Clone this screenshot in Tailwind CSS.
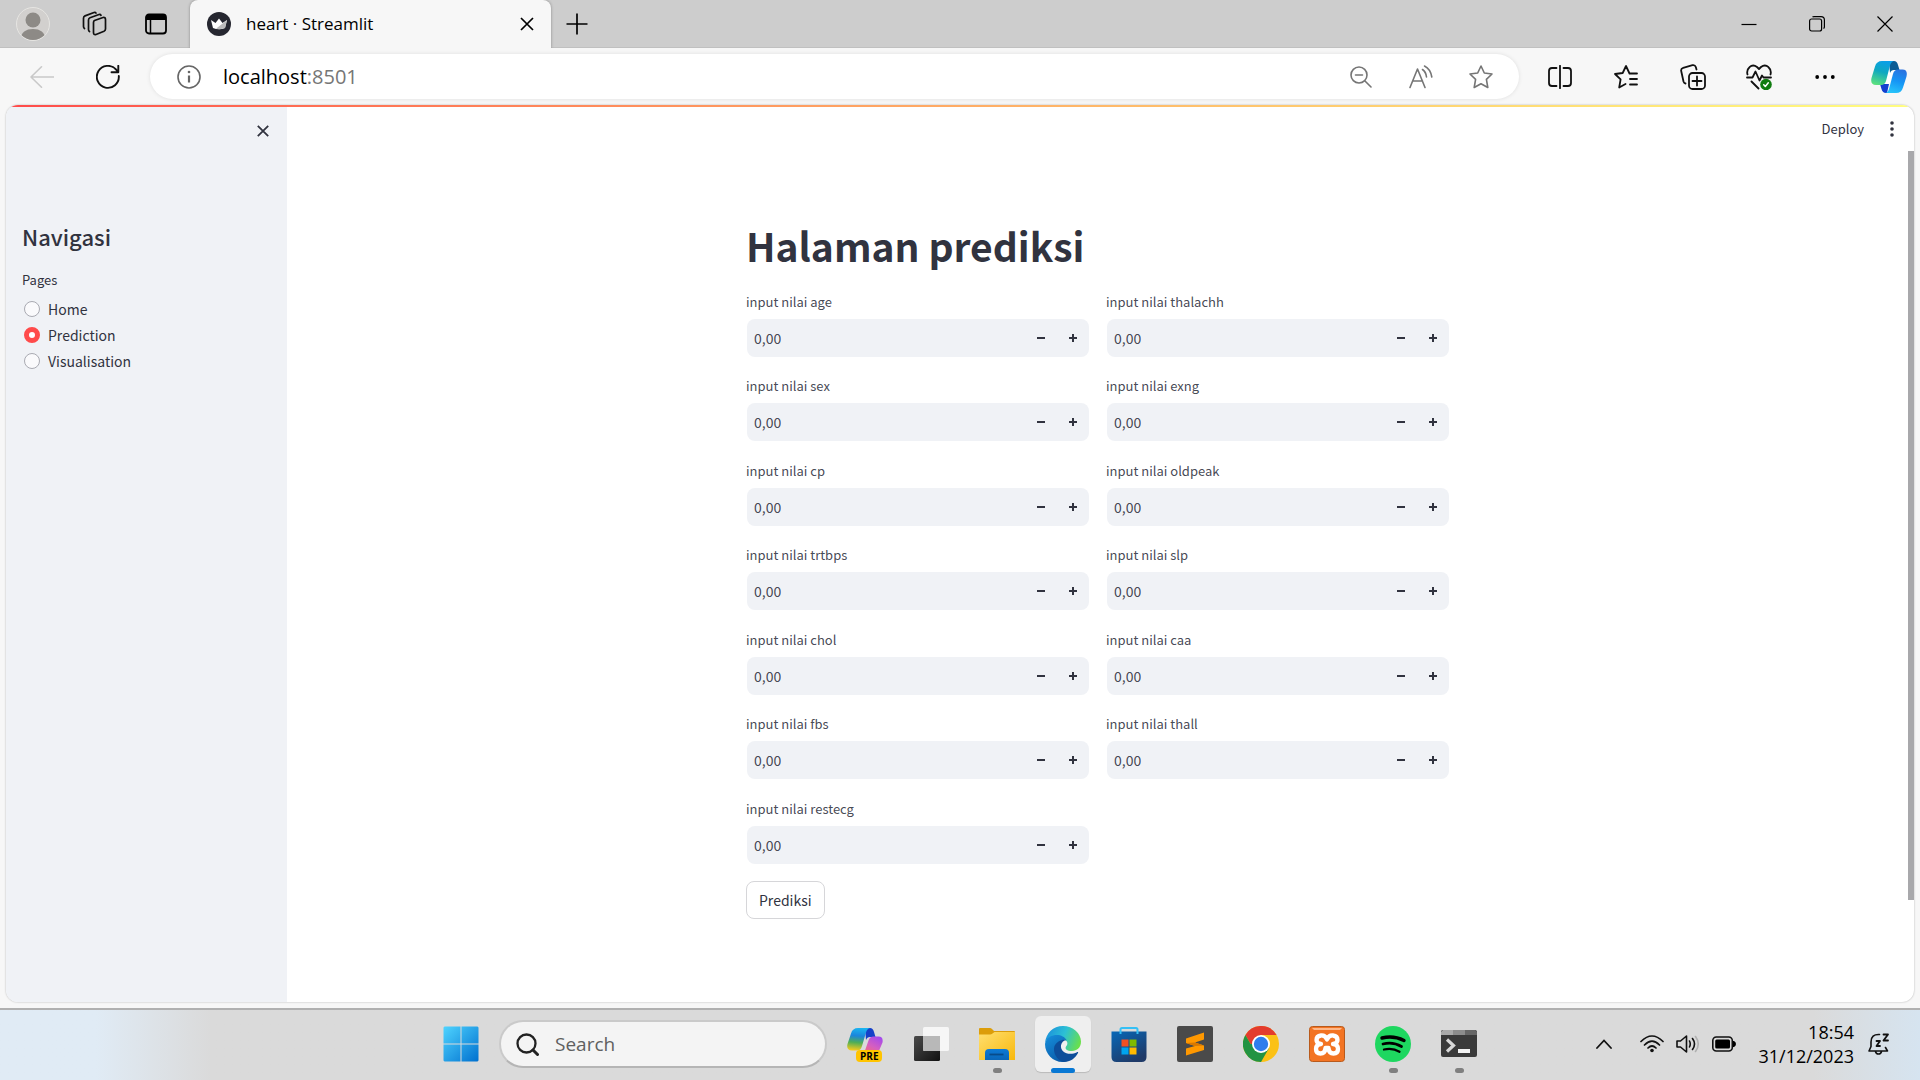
<!DOCTYPE html>
<html lang="id">
<head>
<meta charset="utf-8">
<title>heart · Streamlit</title>
<script src="https://cdn.jsdelivr.net/npm/@tailwindcss/browser@4"></script>
</head>
<body class="flex h-screen flex-col overflow-hidden bg-[#f7f7f7] font-['Open_Sans',sans-serif] text-black">

<!-- Tab strip -->
<header class="flex h-12 shrink-0 items-stretch border-b border-[#c0c0c0] bg-[#cdcdcd]">
  <div class="flex pl-0.5">
    <button aria-label="Profile" class="flex w-[61px] items-center justify-center">
      <svg class="size-[34px]" viewBox="0 0 34 34"><defs><clipPath id="av"><circle cx="17" cy="17" r="16"/></clipPath></defs><circle cx="17" cy="17" r="16.500" fill="#d2d0ce" stroke="#e6e5e2"/><g clip-path="url(#av)" fill="#8d8a86"><circle cx="17" cy="13" r="7.500"/><path d="M4 36c0-10 5-14 13-14s13 4 13 14z"/></g></svg>
    </button>
    <button aria-label="Workspaces" class="flex w-[61px] items-center justify-center">
      <svg class="size-[26px]" viewBox="0 0 26 26" fill="none" stroke="#111" stroke-width="1.700" stroke-linejoin="round" stroke-linecap="round"><path d="M13.500 9.500 22 6.500q2.500-.5 2.500 2V18q0 1.500-1.500 2.200L15 23.500q-2.500.7-2.500-2V11.500q0-1.500 1-2z"/><path d="M8.500 20.500Q7.500 20 7.500 18.500V9q0-1.500 1.500-2.200L18 3.500q1.500-.3 2 .8"/><path d="M3.500 17.500q-1-.7-1-2V7.200q0-1.700 1.500-2.300L13 1.500q1.500-.3 2 .6"/></svg>
    </button>
    <button aria-label="Tab actions" class="flex w-[64px] items-center justify-center">
      <svg class="size-[22px]" viewBox="0 0 22 22"><rect x="1" y="1.500" width="20" height="19" rx="3" fill="none" stroke="#000" stroke-width="1.800"/><path d="M1 7V4q0-3 3-3h14q3 0 3 3v3z"/><path d="M5.500 6v14" stroke="#000" stroke-width="1.500"/></svg>
    </button>
  </div>
  <div class="-mb-px ml-0.5 flex w-[361px] items-center rounded-t-lg bg-[#f7f7f7] pr-3 pl-[17px] shadow-[0_0_3px_rgba(0,0,0,0.35)] [clip-path:inset(0_-4px_0_-4px)]">
    <svg class="size-6" viewBox="0 0 24 24"><circle cx="12" cy="12" r="12" fill="#262730"/><path d="M4 8l4.500 3L12 6.500l3.500 4.500L20 8l-2 8q-6 2.500-12 0z" fill="#fff"/><path d="M20 8l-2 8q-4 1.800-9 .8z" fill="#bbb"/></svg>
    <span class="ml-[15px] flex-1 text-[17px] leading-6">heart · Streamlit</span>
    <button aria-label="Close tab" class="flex size-6 items-center justify-center"><svg class="size-3.5" viewBox="0 0 14 14" stroke="#000" stroke-width="1.700"><path d="M1 1l12 12M13 1L1 13"/></svg></button>
  </div>
  <button aria-label="New tab" class="ml-0.5 flex w-12 items-center justify-center"><svg class="size-[22px]" viewBox="0 0 22 22" stroke="#000" stroke-width="1.700"><path d="M11 .5v21M.5 11h21"/></svg></button>
  <div class="ml-auto flex pr-px">
    <button aria-label="Minimize" class="flex w-[68px] items-center justify-center"><svg class="size-4" viewBox="0 0 16 16" stroke="#000" stroke-width="1.200"><path d="M.5 8.500h15"/></svg></button>
    <button aria-label="Restore" class="flex w-[68px] items-center justify-center"><svg class="size-4" viewBox="0 0 16 16" fill="none" stroke="#000" stroke-width="1.200"><rect x=".6" y="3" width="12" height="12" rx="2"/><path d="M3.500 1.200Q4 .6 5 .6h7q3.400 0 3.400 3.400v7q0 1-.9 1.500"/></svg></button>
    <button aria-label="Close window" class="flex w-[68px] items-center justify-center"><svg class="size-4" viewBox="0 0 16 16" stroke="#000" stroke-width="1.200"><path d="M.5.5l15 15M15.500.5l-15 15"/></svg></button>
  </div>
</header>

<!-- Address bar -->
<nav class="flex h-[57px] shrink-0 items-center pl-[9px]">
  <button aria-label="Back" class="flex w-[66px] items-center justify-center"><svg class="size-6" viewBox="0 0 24 24" fill="none" stroke="#c9c9c9" stroke-width="1.600" stroke-linecap="round" stroke-linejoin="round"><path d="M23.500 12H1M11.500 1.800 1 12l10.500 10.200"/></svg></button>
  <button aria-label="Refresh" class="flex w-[66px] items-center justify-center"><svg class="size-6" viewBox="0 0 24 24" fill="none" stroke="#111" stroke-width="1.900" stroke-linecap="round" stroke-linejoin="round"><path d="M22.800 11A11 11 0 1 1 20 4.500L22 7M22.300.8V7.200H15.500"/></svg></button>
  <div class="ml-[9px] flex h-[45px] flex-1 items-center rounded-full bg-white pr-2 pl-[27px] shadow-[0_0_4px_rgba(0,0,0,0.1)]">
    <svg class="size-6 shrink-0" viewBox="0 0 24 24" fill="none" stroke="#666" stroke-width="1.600"><circle cx="12" cy="12" r="11"/><path d="M12 10.500V17.500" stroke-width="2.200"/><circle cx="12" cy="7" r="1.300" fill="#666" stroke="none"/></svg>
    <div class="ml-[22px] flex-1 text-[20px] leading-6">localhost<span class="text-[#767676]">:8501</span></div>
    <button aria-label="Zoom out" class="flex w-[60px] items-center justify-center"><svg class="size-[22px]" viewBox="0 0 22 22" fill="none" stroke="#757575" stroke-width="1.600" stroke-linecap="round"><circle cx="9" cy="9" r="8"/><path d="M15 15l6 6M5.500 9h7"/></svg></button>
    <button aria-label="Read aloud" class="flex w-[60px] items-center justify-center"><svg class="size-6" viewBox="0 0 24 24" fill="none" stroke="#757575" stroke-width="1.600" stroke-linecap="round" stroke-linejoin="round"><path d="M1 22.500 8.500 4 16 22.500M4 16h9.500M13.500 4.500Q17 7 17.500 12M15.500 1Q21.500 4 22.800 12"/></svg></button>
    <button aria-label="Add to favorites" class="flex w-[60px] items-center justify-center"><svg class="size-6" viewBox="0 0 24 24" fill="none" stroke="#757575" stroke-width="1.600" stroke-linejoin="round"><path d="M12 1l3.300 7 7.700 1-5.600 5.400L18.800 22.500 12 18.700 5.200 22.500l1.400-8.100L1 9l7.700-1z"/></svg></button>
  </div>
  <div class="ml-2 flex items-center">
    <button aria-label="Split screen" class="flex w-[66px] items-center justify-center"><svg class="size-6" viewBox="0 0 24 24" fill="none" stroke="#111" stroke-width="1.800" stroke-linecap="round"><path d="M12 .8v22.400M8.500 3H4Q1 3 1 6v12q0 3 3 3h4.500M15.500 3H20q3 0 3 3v12q0 3-3 3h-4.500"/></svg></button>
    <button aria-label="Favorites" class="flex w-[66px] items-center justify-center"><svg class="size-6" viewBox="0 0 24 24" fill="none" stroke="#111" stroke-width="1.800" stroke-linecap="round" stroke-linejoin="round"><path d="M23 8.500h-7.500L12 1 8.700 8 1 9l5.600 5.400L5.200 22.500 11.500 19M16 14h7M16 19.500h7"/></svg></button>
    <button aria-label="Collections" class="flex w-[67px] items-center justify-center"><svg class="size-[26px]" viewBox="0 0 26 26" fill="none" stroke="#111" stroke-width="1.800" stroke-linecap="round" stroke-linejoin="round"><rect x="9" y="9" width="16" height="16" rx="3.500"/><path d="M17 12.500v9M12.500 17h9M5.500 19.500q-1.500-.3-2-2L1.200 7q-.5-2.500 2-3.200L12.500 1.200q2.500-.5 3.300 1.800l.7 2.500"/></svg></button>
    <button aria-label="Browser essentials" class="flex w-[66px] items-center justify-center"><svg class="size-[26px]" viewBox="0 0 26 26" fill="none" stroke="#111" stroke-width="1.800" stroke-linecap="round" stroke-linejoin="round"><path d="M1.500 10.500Q.3 6 3.500 3.200 7-.2 11 3l2 2 2-2q4-3.200 7.500.2 3.200 2.800 2 7.300M1 13.500h5.500l3-6 4 9 2.500-5 1.500 2H25M5.500 17.500l7 7"/><circle cx="20" cy="20.500" r="5.800" fill="#107c10" stroke="none"/><path d="M17.700 20.800l1.600 1.600 3-3.600" stroke="#fff" stroke-width="1.500"/></svg></button>
    <button aria-label="Settings and more" class="flex w-[66px] items-center justify-center"><svg class="h-1.5 w-5" viewBox="0 0 20 6"><circle cx="2.200" cy="3" r="1.900"/><circle cx="10" cy="3" r="1.900"/><circle cx="17.800" cy="3" r="1.900"/></svg></button>
    <button aria-label="Copilot" class="flex w-[62px] items-center justify-center"><svg class="h-8 w-9" viewBox="0 0 36 32"><defs><linearGradient id="c1" x1=".6" y1="0" x2=".3" y2="1"><stop offset="0" stop-color="#0a9fe8"/><stop offset=".45" stop-color="#0fa8c0"/><stop offset="1" stop-color="#5be07f"/></linearGradient><linearGradient id="c2" x1=".7" y1="0" x2=".4" y2="1"><stop offset="0" stop-color="#2a72e0"/><stop offset=".5" stop-color="#1595f5"/><stop offset="1" stop-color="#27c3fa"/></linearGradient></defs><path d="M14 9h9l-5 15h-6z" fill="#fff"/><path d="M9 23h9l-2 9h-1q-3.500 0-4.500-4z" fill="#1240d0"/><path d="M18 0h5q3 0 4 4l1.500 5H23q-3 0-4 3z" fill="#0a5c94"/><path d="M11 0h12q-3 .5-4 4.500L15 20q-1.200 4-5 4H5Q-1 24 .5 17L4 5.500Q5.500 0 11 0z" fill="url(#c1)"/><path d="M25 32H14.500q2.500-.5 3.500-4l4-15q1.200-4.500 5-4.500h4.500q5.500 0 4 7L32 26.500Q30.500 32 25 32z" fill="url(#c2)"/></svg></button>
  </div>
</nav>

<!-- Streamlit page -->
<div class="mx-1.5 mb-1.5 flex min-h-0 flex-1 flex-col overflow-hidden rounded-xl bg-white font-['Noto_Sans_CJK_SC',sans-serif] text-[#31333f] shadow-[0_0_2px_rgba(0,0,0,0.3)]">
  <div class="h-0.5 shrink-0 bg-linear-to-r from-[#ff4b4b] to-[#fffd80]"></div>
  <div class="flex min-h-0 flex-1">
    <aside class="w-[281px] shrink-0 bg-[#f0f2f6] pl-4">
      <div class="flex h-12 items-center justify-end pr-3">
        <button aria-label="Close sidebar" class="flex size-6 items-center justify-center"><svg class="size-3" viewBox="0 0 12 12" stroke="#31333f" stroke-width="1.800"><path d="M.8.8l10.400 10.400M11.200.8L.8 11.200"/></svg></button>
      </div>
      <h2 class="mt-[65px] text-[22px] leading-8 font-medium">Navigasi</h2>
      <fieldset class="mt-[18px]">
        <legend class="text-[13px] leading-5">Pages</legend>
        <div class="mt-1.5 flex flex-col text-[14px] leading-[26px]">
          <label class="flex items-center gap-2 pl-0.5"><input type="radio" name="page" class="size-4 appearance-none rounded-full border border-[#a9aab2] bg-[#fafafc] checked:border-[5px] checked:border-[#ff4b4b] checked:bg-white">Home</label>
          <label class="flex items-center gap-2 pl-0.5"><input type="radio" name="page" checked class="size-4 appearance-none rounded-full border border-[#a9aab2] bg-[#fafafc] checked:border-[5px] checked:border-[#ff4b4b] checked:bg-white">Prediction</label>
          <label class="flex items-center gap-2 pl-0.5"><input type="radio" name="page" class="size-4 appearance-none rounded-full border border-[#a9aab2] bg-[#fafafc] checked:border-[5px] checked:border-[#ff4b4b] checked:bg-white">Visualisation</label>
        </div>
      </fieldset>
    </aside>
    <div class="flex min-w-0 flex-1 flex-col">
      <div class="flex h-11 shrink-0 items-center justify-end gap-[26px] pr-5">
        <button class="text-[13px] leading-5">Deploy</button>
        <button aria-label="Main menu"><svg class="h-4 w-1" viewBox="0 0 4 16" fill="#31333f"><circle cx="2" cy="2" r="1.800"/><circle cx="2" cy="8" r="1.800"/><circle cx="2" cy="14" r="1.800"/></svg></button>
      </div>
      <div class="flex min-h-0 flex-1">
        <main class="flex-1 pt-[66px]">
          <div class="mx-auto max-w-[703px]">
            <h1 class="text-[39px] leading-14 font-bold">Halaman prediksi</h1>
            <form class="mt-[19px]">
              <div id="fields" class="-mb-0.5 grid h-[591px] grid-flow-col grid-cols-2 grid-rows-7 gap-x-[17px]"></div>
              <button type="button" class="h-[38px] rounded-lg border border-[#d6d6d9] bg-white px-3 text-[14px] leading-5">Prediksi</button>
            </form>
          </div>
        </main>
        <div class="w-1.5"><div class="h-[88%] bg-[#a8a8ab]"></div></div>
      </div>
    </div>
  </div>
</div>

<!-- Taskbar -->
<footer class="grid h-[72px] shrink-0 grid-cols-[1fr_auto_1fr] items-stretch border-t-2 border-[#b0b0b0] bg-linear-to-r from-[#e0ebf5] from-5% via-[#dadada] via-11% to-[#dadada]">
  <div></div>
  <div class="flex items-center pb-0.5">
    <button aria-label="Start" class="flex w-[66px] justify-center"><svg class="size-9" viewBox="0 0 36 36"><defs><linearGradient id="w" x1="0" y1="0" x2="1" y2="1"><stop offset="0" stop-color="#4fd4ff"/><stop offset="1" stop-color="#0070cf"/></linearGradient></defs><path fill="url(#w)" d="M1.500.5H17.500V17.500H.5V1.500zM18.500.5H34.500L35.500 1.500V17.500H18.500zM.5 18.500H17.500V35.500H1.500L.5 34.500zM18.500 18.500H35.500V34.500L34.500 35.500H18.500z"/></svg></button>
    <label class="mx-[5px] flex h-12 w-[328px] items-center rounded-full border-2 border-[#cacaca] border-b-[#b5b5b5] bg-[#f4f4f4] pl-[15px]">
      <svg class="size-[23px] shrink-0" viewBox="0 0 23 23" fill="none" stroke="#222" stroke-width="2.300" stroke-linecap="round"><circle cx="10.500" cy="10.500" r="9"/><path d="M17 17l4.500 4.500" stroke-width="3"/></svg>
      <input type="text" aria-label="Search" placeholder="Search" class="ml-4 w-40 bg-transparent text-[19px] leading-6 outline-none placeholder:text-[#606060]">
    </label>
    <button aria-label="Copilot preview" class="relative flex w-[66px] justify-center"><svg class="size-9" viewBox="0 0 36 36"><defs><linearGradient id="p1" x1=".5" y1="0" x2=".4" y2="1"><stop offset="0" stop-color="#1ab4f0"/><stop offset=".35" stop-color="#1a85dc"/><stop offset=".65" stop-color="#4fae56"/><stop offset="1" stop-color="#f7cb1c"/></linearGradient><linearGradient id="p2" x1=".9" y1="0" x2=".2" y2="1"><stop offset="0" stop-color="#a048f0"/><stop offset=".5" stop-color="#d55fc0"/><stop offset="1" stop-color="#ff7060"/></linearGradient></defs><path d="M18 2h5q3 0 4 4l1.500 5H23q-3 0-4 3z" fill="#1540c8"/><path d="M11 2h12q-3 .5-4 4.500L15 20q-1.200 4.500-5 4.500H5Q-1 24.500 .5 18L4 7.500Q5.500 2 11 2z" fill="url(#p1)"/><path d="M25 29H11q6-.5 7-4.500l3.500-10q1.200-4 5-4h5q5 0 4 6L31.500 26q-1.500 3-6.500 3z" fill="url(#p2)"/></svg><span class="absolute top-6 left-6 rounded-sm bg-[#ffc400] px-1 text-[10px] leading-3 font-bold">PRE</span></button>
    <button aria-label="Task view" class="flex w-[66px] justify-center"><svg class="size-9" viewBox="0 0 36 36"><defs><linearGradient id="t" x1="0" y1="0" x2="1" y2="1"><stop offset="0" stop-color="#4a4a4a"/><stop offset="1" stop-color="#111"/></linearGradient></defs><rect x="1" y="10" width="26" height="25" rx="1.500" fill="url(#t)"/><rect x="10" y="1" width="26" height="24" rx="1.500" fill="#f6f6f6"/><path d="M10 10h17v15H11.500L10 23.500z" fill="#b8b8b8"/></svg></button>
    <button aria-label="File Explorer" class="relative flex w-[66px] justify-center"><svg class="size-9" viewBox="0 0 36 36"><defs><linearGradient id="f" x1="0" y1="0" x2="1" y2="1"><stop offset="0" stop-color="#ffdf70"/><stop offset="1" stop-color="#f8b80c"/></linearGradient><linearGradient id="f2" x1="0" y1="0" x2="0" y2="1"><stop offset="0" stop-color="#0d7ad6"/><stop offset="1" stop-color="#0a66b8"/></linearGradient></defs><path d="M0 3q0-1 1-1h10q1 0 2 1l2 2h20q1 0 1 1v6H0z" fill="#dc9d0a"/><path d="M0 8.500h11q1.500 0 2.500-1L15.500 6H36v28H0z" fill="url(#f)"/><path d="M6 34v-7q0-4 4-4h16q4 0 4 4v7z" fill="url(#f2)"/><path d="M10.500 28.500h14" stroke="#084b8a" stroke-width="1.800"/></svg><span class="absolute top-[42px] h-[5px] w-[9px] rounded-full bg-[#808080]"></span></button>
    <button aria-label="Microsoft Edge" class="relative mx-[5px] flex h-14 w-14 items-center justify-center rounded-md bg-[#efefef] shadow-[0_1px_1px_rgba(0,0,0,0.15)]"><svg class="size-9" viewBox="0 0 36 36"><defs><linearGradient id="e1" x1="0" y1=".3" x2="1" y2=".6"><stop offset="0" stop-color="#1b90dc"/><stop offset=".5" stop-color="#2cc0d5"/><stop offset="1" stop-color="#6ae04a"/></linearGradient><linearGradient id="e2" x1="0" y1="0" x2=".6" y2="1"><stop offset="0" stop-color="#168fdc"/><stop offset="1" stop-color="#0a5aa8"/></linearGradient></defs><path d="M0 17C1 7 8 0 18 0s18 7.500 18 15.500c0 6-4 9.500-9 9.500s-7.500-2-6-4.500c2-2 2-5-1-6.500C13 8 3 9 0 17z" fill="url(#e1)"/><path d="M0 18C1 11 7 9 12 9c4 0 8 2 9.500 5-5-1-8.500 3-8 8 .5 7 6 12 13 11-3 2-6 3-9 3C8 36 0 28 0 18z" fill="url(#e2)"/><path d="M21.500 14c-5-1-10 2-12 6-2 6 2 14 9 16 7 0 12-4 14.500-9 .5-1-.3-1.300-1-.8-8 4-17 0-16-7 .5-3 3-5 5.500-5.200z" fill="#0d4d9a"/></svg><span class="absolute -bottom-px h-[5px] w-6 rounded-full bg-[#0878d4]"></span></button>
    <button aria-label="Microsoft Store" class="flex w-[66px] justify-center"><svg class="size-9" viewBox="0 0 36 36"><defs><linearGradient id="s" x1="0" y1="0" x2=".6" y2="1"><stop offset="0" stop-color="#0868b8"/><stop offset="1" stop-color="#1f3a68"/></linearGradient></defs><path d="M.5 5.500h35V31q0 5-5 5h-25q-5 0-5-5z" fill="url(#s)"/><path d="M9.500 8V3.500Q9.500 2 11 2h14q1.500 0 1.500 1.500V8" fill="none" stroke="#35c0f5" stroke-width="2"/><path d="M10.500 13.500h7v7h-7z" fill="#f25022"/><path d="M18.500 13.500h7v7h-7z" fill="#7fba00"/><path d="M10.500 21.500h7v7h-7z" fill="#00a4ef"/><path d="M18.500 21.500h7v7h-7z" fill="#ffb900"/></svg></button>
    <button aria-label="Sublime Text" class="flex w-[66px] justify-center"><svg class="size-9" viewBox="0 0 36 36"><rect width="36" height="36" rx="2" fill="#4a4a4a"/><path d="M9 12.500 27 6.500v7L18 16.500 27 19.500V24L9 29.500V22.500L18 20 9 17z" fill="#ff9800"/><path d="M18 16.500 27 19.500 18 20 9 17z" fill="#d97800"/></svg></button>
    <button aria-label="Google Chrome" class="flex w-[66px] justify-center"><svg class="size-9" viewBox="0 0 36 36"><circle cx="18" cy="18" r="18" fill="#fbc116"/><path d="M2.400 9A18 18 0 0 1 33.600 9H18L10.200 22.500z" fill="#e33b2e"/><path d="M2.400 9A18 18 0 0 0 18 36l7.800-13.500L18 18H7.600z" fill="#229342"/><circle cx="18" cy="18" r="9" fill="#fff"/><circle cx="18" cy="18" r="7.200" fill="#2f7ded"/></svg></button>
    <button aria-label="XAMPP" class="flex w-[66px] justify-center"><svg class="size-9" viewBox="0 0 36 36"><rect x=".5" y=".5" width="35" height="35" rx="3" fill="#f37423" stroke="#b85a1c"/><path d="M3 2h30l-2 2H5z" fill="#ffb888"/><path d="M18 13.500q-2-4.500-6-4-4.500.5-4.500 4.500 0 3.500 4.500 4-5 .5-5 5t4.500 4.500q4.500 0 5-5.500h3q.5 5.500 5 5.500t4.500-4.500q0-4.500-5-5 4.500-.5 4.500-4 0-4-4.500-4.500-4-.5-6 4z" fill="none" stroke="#fff" stroke-width="4.300" stroke-linejoin="round"/></svg></button>
    <button aria-label="Spotify" class="relative flex w-[66px] justify-center"><svg class="size-9" viewBox="0 0 36 36"><circle cx="18" cy="18" r="18" fill="#1ed760"/><g fill="none" stroke="#000" stroke-linecap="round"><path d="M7 12q11.500-3 22 2.500" stroke-width="3.400"/><path d="M8 18q10-2.500 18.500 2.500" stroke-width="2.800"/><path d="M9 23.500q8.500-2 15.500 2.200" stroke-width="2.300"/></g></svg><span class="absolute top-[42px] h-[5px] w-[9px] rounded-full bg-[#808080]"></span></button>
    <button aria-label="Terminal" class="relative flex w-[66px] justify-center"><svg class="size-9" viewBox="0 0 36 36"><rect y="4" width="36" height="27" rx="2" fill="#3a3a3a"/><path d="M2 4h10v5H0V6z" fill="#aaa"/><path d="M12 4h12v5H12z" fill="#8c8c8c"/><path d="M24 4h10l2 2v3H24z" fill="#666"/><path d="M6 13.500l6.500 6L6 25.500" fill="none" stroke="#d8d8d8" stroke-width="3.200"/><rect x="17" y="23" width="12" height="4" fill="#f2f2f2"/></svg><span class="absolute top-[42px] h-[5px] w-[9px] rounded-full bg-[#808080]"></span></button>
  </div>
  <div class="flex items-center justify-end bg-linear-to-r from-transparent from-75% to-[#d6e4f0] pr-[30px] pb-0.5">
    <button aria-label="Show hidden icons" class="mr-7"><svg class="h-2.5 w-4" viewBox="0 0 16 10" fill="none" stroke="#111" stroke-width="1.800" stroke-linecap="round"><path d="M1 9l7-7.500L15 9"/></svg></button>
    <button aria-label="Network, volume and battery" class="mr-[22px] flex items-center gap-3">
      <svg class="h-[18px] w-6" viewBox="0 0 24 18" fill="none" stroke="#111" stroke-width="1.700" stroke-linecap="round"><path d="M1 6.500Q12-4.500 23 6.500M4.500 10Q12 2.500 19.500 10M8 13Q12 9 16 13"/><circle cx="12" cy="15.500" r="1.800" fill="#111" stroke="none"/></svg>
      <svg class="h-[18px] w-6" viewBox="0 0 24 18" fill="none" stroke="#111" stroke-width="1.600" stroke-linecap="round" stroke-linejoin="round"><path d="M1 6h3.500l6-5v16l-6-5H1zM13.500 6q1.500 3 0 6M16.500 3.500q4 5.500 0 11"/><path d="M19.500 1.500q5.500 7.500 0 15" stroke="#b0b0b0"/></svg>
      <svg class="h-4 w-6" viewBox="0 0 24 16"><rect x=".8" y="1" width="19.500" height="14" rx="3.500" fill="none" stroke="#111" stroke-width="1.600"/><rect x="3.200" y="3.500" width="14.800" height="9" rx="1.500"/><path d="M21 5h1q2 1 2 3t-2 3h-1z"/></svg>
    </button>
    <div class="text-right text-[18px] leading-6"><div>18:54</div><div>31/12/2023</div></div>
    <button aria-label="Notifications" class="ml-[14px]"><svg class="size-[22px]" viewBox="0 0 22 22" fill="none" stroke="#111" stroke-width="1.600" stroke-linejoin="round" stroke-linecap="round"><path d="M11.500 1.500Q3 1 3 9v4.500L1 18h18.500l-2-3.500M7.500 18.500q.5 2.500 3 2.500t3-2.500"/><path d="M8.500 8H12L8.500 13H12M15.500 1.500H20l-4.500 6H20" stroke-width="1.800"/></svg></button>
  </div>
</footer>

<script>
  const names = ['age', 'sex', 'cp', 'trtbps', 'chol', 'fbs', 'restecg', 'thalachh', 'exng', 'oldpeak', 'slp', 'caa', 'thall'];
  document.getElementById('fields').innerHTML = names.map(name => `
    <div>
      <label for="${name}" class="block text-[13px] leading-5 text-[#31333f]/90">input nilai ${name}</label>
      <div class="mt-[7px] ml-px flex h-[38px] items-stretch rounded-lg bg-[#f0f2f6]">
        <input id="${name}" type="text" inputmode="decimal" value="0,00" class="min-w-0 flex-1 bg-transparent pl-[7px] text-[14px] leading-5 text-[#31333f]/90 outline-none">
        <button type="button" aria-label="Decrease ${name}" class="flex w-8 items-center justify-center"><svg class="size-2" viewBox="0 0 8 8" fill="#31333f"><path d="M0 3h8v2H0z"/></svg></button>
        <button type="button" aria-label="Increase ${name}" class="flex w-8 items-center justify-center"><svg class="size-2" viewBox="0 0 8 8" fill="#31333f"><path d="M0 3h3V0h2v3h3v2H5v3H3V5H0z"/></svg></button>
      </div>
    </div>`).join('');
</script>
</body>
</html>
